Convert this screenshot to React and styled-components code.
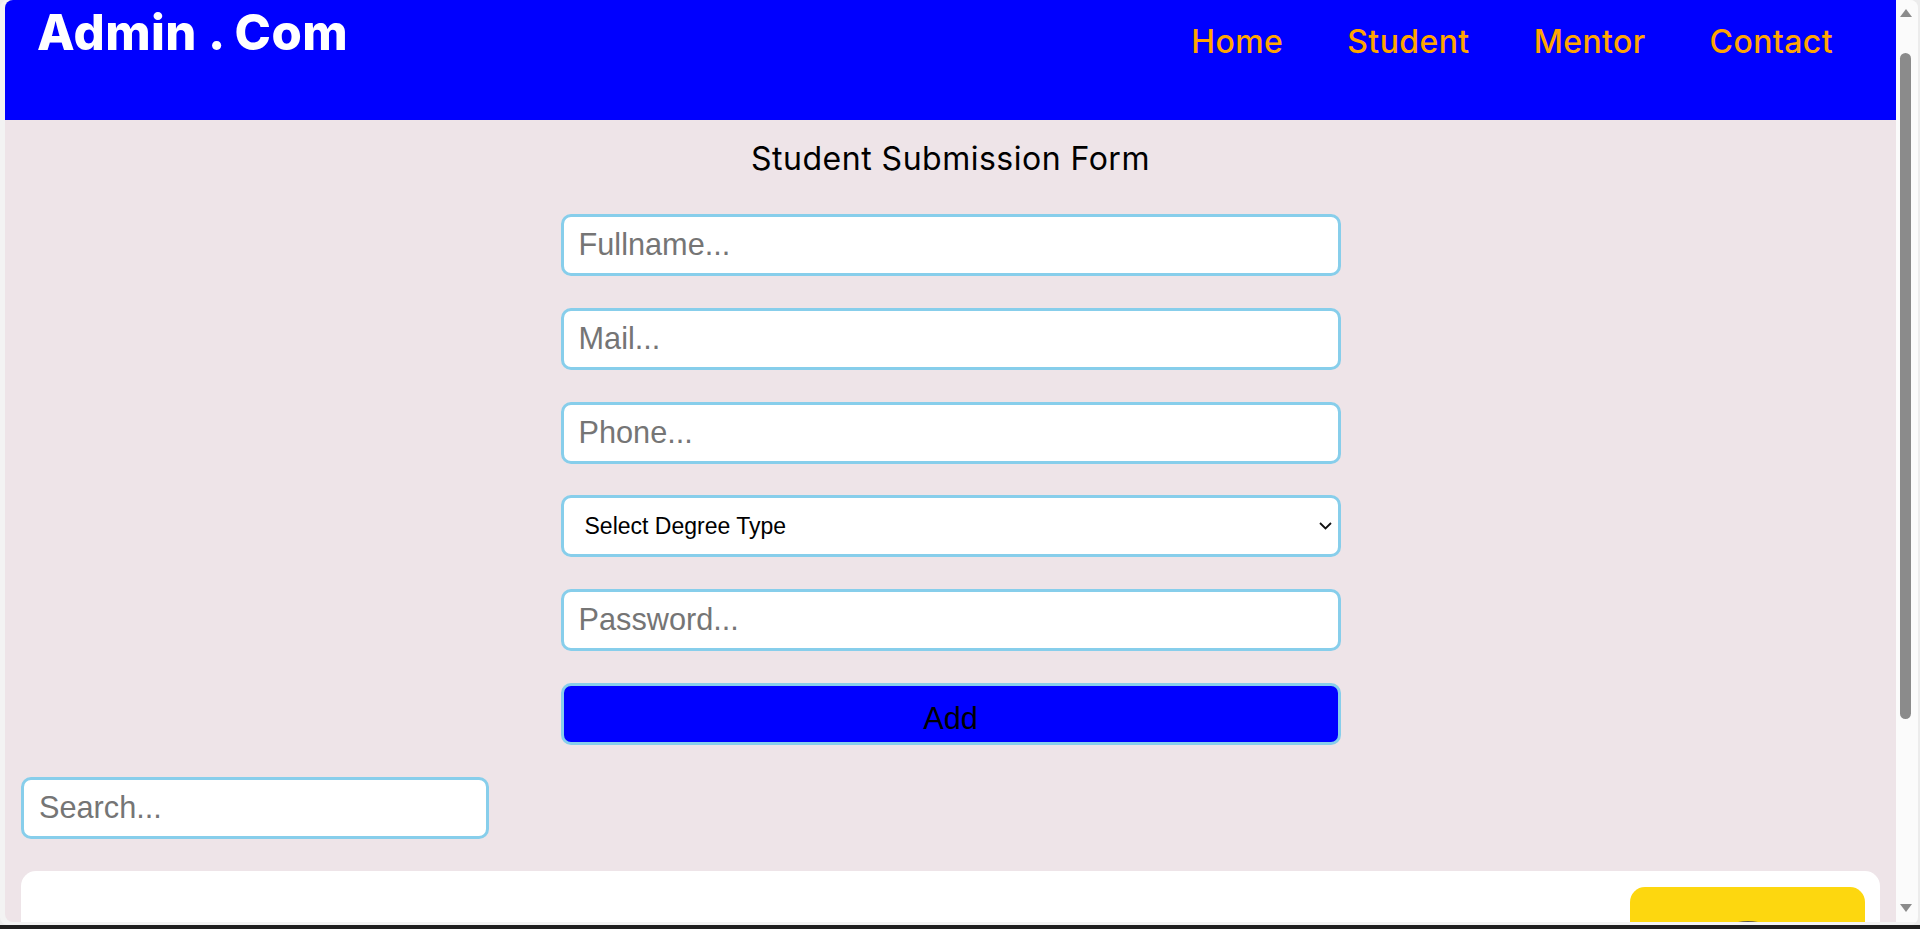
import React from "react";
import styled, { createGlobalStyle } from "styled-components";

const GlobalStyle = createGlobalStyle`
  html, body {
    margin: 0;
    padding: 0;
    height: 100%;
    overflow: hidden;
    background: #ececec;
  }
  *, *::before, *::after { box-sizing: border-box; }
`;

const Desktop = styled.div`
  width: 1920px;
  height: 929px;
  display: flex;
  flex-direction: column;
  background: #ececec;
`;

const Window = styled.div`
  width: 1918px;
  height: 925px;
  display: flex;
  padding: 0 0 3px 5px;
  background: #f3f3f3;
  border-radius: 8px;
  overflow: hidden;
`;

const Taskbar = styled.div`
  flex: 1;
  background: #1f1f1f;
`;

const Viewport = styled.div`
  flex: 1;
  min-width: 0;
  height: 100%;
  overflow: hidden;
  background: #eee4e8;
  border-radius: 8px 0 0 8px;
`;

const ScrollTrack = styled.div`
  width: 22px;
  height: 100%;
  display: flex;
  flex-direction: column;
  padding: 9px 0 10px 4px;
  background: #fbfbfb;
`;

const ScrollThumb = styled.div`
  width: 11px;
  height: 666px;
  margin-top: 36px;
  border-radius: 6px;
  background: #8b8b8b;
`;

const ScrollSpacer = styled.div`
  flex: 1;
`;

const Header = styled.header`
  height: 120px;
  background: #0000ff;
  display: flex;
  justify-content: space-between;
  align-items: flex-start;
`;

const Logo = styled.h1`
  margin: 8px 0 0 32px;
  font: 800 49px/1 Inter, "Liberation Sans", sans-serif;
  color: #ffffff;
  letter-spacing: 0.4px;
`;

const Nav = styled.nav`
  display: flex;
  gap: 64px;
  padding: 26px 63px 0 0;
`;

const NavLink = styled.a`
  font: 500 32px/1 Inter, "Liberation Sans", sans-serif;
  letter-spacing: 0.4px;
  color: #ffa500;
  text-decoration: none;
`;

const Title = styled.h2`
  margin: 23px 0 0;
  text-align: center;
  font: 400 32px/1 Inter, "Liberation Sans", sans-serif;
  letter-spacing: 0.5px;
  color: #000000;
`;

const Form = styled.form`
  margin-top: 39px;
  display: flex;
  flex-direction: column;
  align-items: center;
  gap: 31.8px;
`;

const Field = styled.input`
  width: ${(p) => p.$width || 780}px;
  height: 62px;
  margin: 0;
  padding: 0 15px;
  border: 3px solid #87ceeb;
  border-radius: 10px;
  background: #ffffff;
  font: 400 30.7px "Liberation Sans", Arial, sans-serif;
  color: #000;
  outline: none;
  &::placeholder { color: #757575; }
`;

const SelectWrap = styled.div`
  position: relative;
  width: 780px;
  height: 62px;
`;

const Select = styled.select`
  width: 100%;
  height: 100%;
  margin: 0;
  padding: 0 30px 0 21px;
  border: 3px solid #87ceeb;
  border-radius: 10px;
  background: #ffffff;
  font: 400 23px "Liberation Sans", Arial, sans-serif;
  color: #000;
  outline: none;
  appearance: none;
  -webkit-appearance: none;
`;

const Chevron = styled.svg`
  position: absolute;
  right: 9px;
  top: 50%;
  transform: translateY(-50%);
  pointer-events: none;
`;

const AddButton = styled.button`
  width: 780px;
  height: 62px;
  margin: 0;
  padding: 10px 0 0;
  border: 3px solid #87ceeb;
  border-radius: 10px;
  background: #0000ff;
  font: 400 30.7px "Liberation Sans", Arial, sans-serif;
  color: #000;
  cursor: pointer;
`;

const SearchRow = styled.div`
  margin-top: 31.8px;
  padding: 0 16px;
  display: flex;
`;

const Card = styled.section`
  margin: 31.8px 16px 0;
  padding: 16px 15px;
  height: 320px;
  background: #ffffff;
  border-radius: 15px;
  display: flex;
  justify-content: flex-end;
`;

const ProfileBox = styled.div`
  width: 235px;
  height: 280px;
  padding-top: 34px;
  background: #fdd70f;
  border-radius: 15px;
  display: flex;
  justify-content: center;
`;

const Avatar = styled.div`
  width: 100px;
  height: 100px;
  border-radius: 50%;
  background: #5a5550;
`;

const Arrow = ({ down }) => (
  <svg width="12" height="8" viewBox="0 0 12 8" aria-hidden="true">
    <path d={down ? "M0 0 H12 L6 8 Z" : "M0 8 H12 L6 0 Z"} fill="#8b8b8b" />
  </svg>
);

export default function App() {
  return (
    <>
      <GlobalStyle />
      <Desktop>
        <Window>
          <Viewport>
            <Header>
              <Logo>Admin . Com</Logo>
              <Nav>
                <NavLink href="#">Home</NavLink>
                <NavLink href="#">Student</NavLink>
                <NavLink href="#">Mentor</NavLink>
                <NavLink href="#">Contact</NavLink>
              </Nav>
            </Header>
            <main>
              <Title>Student Submission Form</Title>
              <Form onSubmit={(e) => e.preventDefault()}>
                <Field type="text" placeholder="Fullname..." />
                <Field type="email" placeholder="Mail..." />
                <Field type="tel" placeholder="Phone..." />
                <SelectWrap>
                  <Select defaultValue="">
                    <option value="">Select Degree Type</option>
                    <option value="ug">UG</option>
                    <option value="pg">PG</option>
                  </Select>
                  <Chevron width="13" height="8" viewBox="0 0 13 8" aria-hidden="true">
                    <path d="M1 1 L6.5 6.5 L12 1" fill="none" stroke="#111" strokeWidth="1.8" />
                  </Chevron>
                </SelectWrap>
                <Field type="password" placeholder="Password..." />
                <AddButton type="submit">Add</AddButton>
              </Form>
              <SearchRow>
                <Field $width={468} type="text" placeholder="Search..." />
              </SearchRow>
              <Card>
                <ProfileBox>
                  <Avatar />
                </ProfileBox>
              </Card>
            </main>
          </Viewport>
          <ScrollTrack>
            <Arrow />
            <ScrollThumb />
            <ScrollSpacer />
            <Arrow down />
          </ScrollTrack>
        </Window>
        <Taskbar />
      </Desktop>
    </>
  );
}
